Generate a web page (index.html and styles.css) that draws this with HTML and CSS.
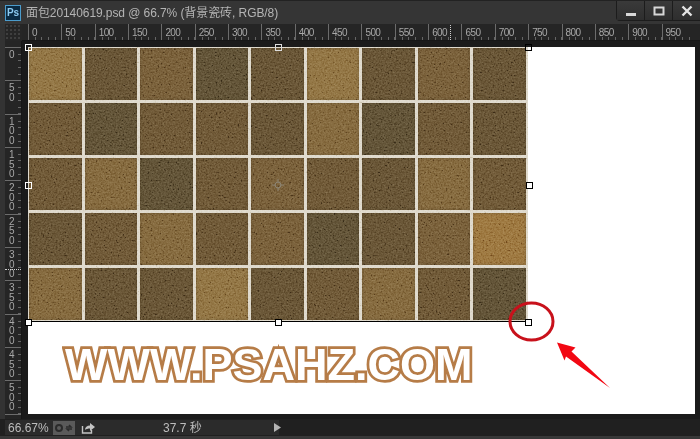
FILE: index.html
```html
<!DOCTYPE html>
<html lang="zh">
<head>
<meta charset="utf-8">
<title>面包20140619.psd</title>
<link rel="stylesheet" href="styles.css">
</head>
<body>
<div class="app">
  <header class="titlebar">
    <div class="ps-logo">Ps</div>
    <div class="doc-title">面包20140619.psd @ 66.7% (背景瓷砖, RGB/8)</div>
    <div class="win-buttons">
      <div class="win-btn"><svg width="12" height="12" viewBox="0 0 12 12"><rect x="1" y="8" width="10" height="3" fill="#d8d8d8"/></svg></div>
      <div class="win-btn"><svg width="12" height="12" viewBox="0 0 12 12"><rect x="1.500" y="2.500" width="9" height="7" fill="none" stroke="#d8d8d8" stroke-width="2"/></svg></div>
      <div class="win-btn last"><svg width="12" height="12" viewBox="0 0 12 12"><path d="M1.500 1.500 10.500 10.500M10.500 1.500 1.500 10.500" stroke="#e4e4e4" stroke-width="2.400"/></svg></div>
    </div>
  </header>
  <main class="doc">
    <div class="corner"></div>
    <div class="hruler">
      <span class="hmark">0</span><span class="hmark">50</span><span class="hmark">100</span><span class="hmark">150</span><span class="hmark">200</span><span class="hmark">250</span><span class="hmark">300</span><span class="hmark">350</span><span class="hmark">400</span><span class="hmark">450</span><span class="hmark">500</span><span class="hmark">550</span><span class="hmark">600</span><span class="hmark">650</span><span class="hmark">700</span><span class="hmark">750</span><span class="hmark">800</span><span class="hmark">850</span><span class="hmark">900</span><span class="hmark">950</span>
      <i class="cursor-x"></i>
    </div>
    <div class="vruler">
      <span class="vmark">0</span><span class="vmark">5<br>0</span><span class="vmark">1<br>0<br>0</span><span class="vmark">1<br>5<br>0</span><span class="vmark">2<br>0<br>0</span><span class="vmark">2<br>5<br>0</span><span class="vmark">3<br>0<br>0</span><span class="vmark">3<br>5<br>0</span><span class="vmark">4<br>0<br>0</span><span class="vmark">4<br>5<br>0</span><span class="vmark">5<br>0<br>0</span><span class="vmark"></span>
      <i class="cursor-y"></i>
    </div>
    <div class="pasteboard">
      <div class="canvas">
        <div class="picture">
          <div class="tiles">
            <b class="a"></b><b class="e"></b><b class="c"></b><b class="f"></b><b class="e"></b><b class="a"></b><b class="e"></b><b class="c"></b><b class="e"></b>
            <b class="d"></b><b class="f"></b><b class="d"></b><b class="d"></b><b class="e"></b><b class="b"></b><b class="f"></b><b class="d"></b><b class="e"></b>
            <b class="d"></b><b class="b"></b><b class="f"></b><b class="d"></b><b class="c"></b><b class="d"></b><b class="e"></b><b class="b"></b><b class="d"></b>
            <b class="e"></b><b class="d"></b><b class="b"></b><b class="d"></b><b class="c"></b><b class="f"></b><b class="e"></b><b class="c"></b><b class="g"></b>
            <b class="b"></b><b class="e"></b><b class="e"></b><b class="a"></b><b class="e"></b><b class="d"></b><b class="b"></b><b class="d"></b><b class="f"></b>
          </div>
          <svg class="grain" width="500" height="274">
            <filter id="noise" x="0" y="0" width="100%" height="100%">
              <feTurbulence type="fractalNoise" baseFrequency="0.6" numOctaves="2" seed="4"/>
              <feColorMatrix values="0.7 0.7 0.7 0 -0.66 0.7 0.7 0.7 0 -0.66 0.7 0.7 0.7 0 -0.66 0 0 0 0 1"/>
              <feGaussianBlur stdDeviation="0.6"/>
            </filter>
            <rect width="500" height="274" filter="url(#noise)"/>
          </svg>
          <svg class="target" width="16" height="16" viewBox="0 0 16 16"><path d="M8 2v4M8 10v4M2 8h4M10 8h4" stroke="#8d8472" fill="none"/><circle cx="8" cy="8" r="3" stroke="#8d8472" fill="none"/></svg>
        </div>
        <div class="watermark">WWW.PSAHZ.COM</div>
        <i class="handle h-tl"></i><i class="handle h-tc"></i><i class="handle h-tr"></i>
        <i class="handle h-ml"></i><i class="handle h-mr"></i>
        <i class="handle h-bl"></i><i class="handle h-bc"></i><i class="handle h-br"></i>
        <svg class="markup" width="667" height="367" viewBox="28 47 667 367">
          <ellipse cx="531.500" cy="321.500" rx="21.500" ry="18.500" fill="none" stroke="#c8111b" stroke-width="3"/>
          <path d="M557 342.500 575.500 347.500 571.500 351.500 610 388 566 356.500 564.500 360.500Z" fill="#f20813"/>
        </svg>
      </div>
    </div>
  </main>
  <footer class="statusbar">
    <div class="status-panel">
      <span class="zoom-value">66.67%</span>
      <span class="gears"><svg width="22" height="12" viewBox="0 0 22 12"><circle cx="6" cy="6" r="3" fill="none" stroke="#2b2b2b" stroke-width="2"/><path d="M13 5h5l-2-2M19 7h-5l2 2" fill="none" stroke="#2b2b2b" stroke-width="1.500"/></svg></span>
      <svg class="share" width="14" height="12" viewBox="0 0 14 12"><path d="M1.500 4v7h9V8" fill="none" stroke="#c4c4c4" stroke-width="1.400"/><path d="M4 8c0-3 2-4.500 5-4.500V1l5 4-5 4V6.500C7 6.500 5 7 4 8Z" fill="#c4c4c4"/></svg>
      <span class="timing">37.7 秒</span>
      <svg class="play" width="7" height="9" viewBox="0 0 7 9"><path d="M0 0 7 4.500 0 9Z" fill="#b4b4b4"/></svg>
    </div>
  </footer>
</div>
</body>
</html>
```
FILE: styles.css
```css
* { box-sizing: border-box; }
html, body { margin: 0; padding: 0; }
body { background: #323232; font-family: "Liberation Sans", "Noto Sans CJK SC", sans-serif; overflow: hidden; }

.app { width: 700px; height: 439px; display: flex; flex-direction: column; overflow: hidden; background: #333; border-top: 1px solid #222; }

.titlebar { height: 23px; flex: none; display: flex; align-items: flex-start; padding-left: 5px; background: #353535; }
.ps-logo { width: 16px; height: 16px; margin-top: 4px; background: #0a2a42; border: 1px solid #4b9ccc; color: #8cc9ef; font-size: 10px; font-weight: bold; line-height: 14px; text-align: center; }
.doc-title { margin: 3px 0 0 5px; font-size: 12px; line-height: 18px; letter-spacing: -0.08px; color: #b4b4b4; white-space: nowrap; }
.win-buttons { margin-left: auto; display: flex; height: 20px; background: #2f2f2f; border-bottom: 1px solid #1c1c1c; border-left: 1px solid #1c1c1c; border-bottom-left-radius: 4px; }
.win-btn { width: 28px; display: flex; align-items: center; justify-content: center; border-right: 1px solid #1c1c1c; background: linear-gradient(#3a3a3a, #2e2e2e); }
.win-btn.last { width: 27px; border-right: 0; }

.doc { flex: none; margin-left: 5px; height: 395px; display: grid; grid-template-columns: 17px 1fr; grid-template-rows: 17px 378px; }
.corner { background: #262626 radial-gradient(circle, #5c5c5c 0.6px, transparent 0.8px) 0 0 / 4px 4px; }
.hruler { position: relative; display: flex; padding-left: 6px; background: #252525; overflow: hidden; border-bottom: 1px solid #171717; }
.hmark { flex: none; width: 33.35px; height: 16px; padding: 3px 0 0 4px; font-size: 10px; line-height: 11px; letter-spacing: -0.6px; color: #a8a8a8;
  background:
    linear-gradient(#6c6c6c, #6c6c6c) 0 0 / 1px 100% no-repeat,
    repeating-linear-gradient(90deg, #666 0 1px, transparent 1px 6.67px) 0 bottom / 100% 3px no-repeat; }
.cursor-x { position: absolute; left: 428px; top: 1px; height: 15px; border-left: 1px dotted #d0d0d0; }
.vruler { position: relative; padding-top: 6px; background: #252525; overflow: hidden; border-right: 1px solid #171717; }
.vmark { display: block; height: 33.35px; padding: 3px 0 0 4px; font-size: 10px; line-height: 9.5px; color: #a8a8a8;
  background:
    linear-gradient(#6c6c6c, #6c6c6c) 0 0 / 100% 1px no-repeat,
    repeating-linear-gradient(180deg, #666 0 1px, transparent 1px 6.67px) right 0 / 3px 100% no-repeat; }
.cursor-y { position: absolute; left: 0; top: 228px; width: 16px; border-top: 1px dotted #d0d0d0; }

.pasteboard { background: #1b1b1b; padding: 6px 0 0 6px; overflow: hidden; }
.canvas { position: relative; width: 667px; height: 367px; background: #fff; }
.picture { position: relative; width: 500px; height: 275px; border-bottom: 1px solid #000; overflow: hidden; background: #d8d2c4; }
.tiles { display: grid; grid-template-columns: repeat(9, 1fr); grid-template-rows: repeat(5, 52px); gap: 3px; padding: 1px 2px 0 1px; background: #dcd6c8; height: 274px; filter: blur(0.5px); }
.tiles b { display: block; box-shadow: inset 0 0 3px rgba(50, 38, 20, 0.4); }
.tiles .a { background: #8a6c3a; }
.tiles .b { background: #7c6034; }
.tiles .c { background: #705630; }
.tiles .d { background: #664f2d; }
.tiles .e { background: #5f4b2c; }
.tiles .f { background: #58492d; }
.tiles .g { background: #966f36; }
.grain { position: absolute; left: 0; top: 0; mix-blend-mode: soft-light; opacity: 0.6; }
.target { position: absolute; left: 242px; top: 130px; }

.watermark { position: absolute; left: 37px; top: 295px; font-size: 45px; line-height: 46px; font-weight: bold; white-space: nowrap; color: #fff; -webkit-text-stroke: 5.5px #b67c47; paint-order: stroke fill; filter: blur(0.4px); }

.handle { position: absolute; width: 7px; height: 7px; background: transparent; border: 1px solid #000; margin: -3px 0 0 -3px; }
.h-tl, .h-tc, .h-tr { top: 0; }
.h-ml, .h-mr { top: 138px; }
.h-bl, .h-bc, .h-br { top: 275px; }
.h-tl, .h-ml { left: 0; border-color: #fff; }
.h-bl { left: 0; background: #fff; }
.h-tc, .h-bc { left: 250px; }
.h-tc { border-color: #ddd; }
.h-tr, .h-br { left: 500px; }
.h-mr { left: 501px; }
.h-br, .h-bc, .h-mr { background: #fff; }
.markup { position: absolute; left: 0; top: 0; pointer-events: none; }

.statusbar { flex: 1; background: #202020; padding: 0 0 4px 5px; display: flex; align-items: flex-end; box-shadow: inset 0 -3px 0 #383838; }
.status-panel { width: 274px; height: 15px; background: #2b2b2b; display: flex; align-items: center; font-size: 12px; line-height: 14px; color: #bdbdbd; }
.zoom-value { width: 48px; padding-left: 3px; flex: none; }
.gears { width: 22px; height: 14px; background: #5a5a5a; display: flex; flex: none; align-items: center; }
.share { margin-left: 6px; flex: none; }
.timing { margin-left: 68px; flex: none; }
.play { margin-left: 72px; flex: none; }
```
